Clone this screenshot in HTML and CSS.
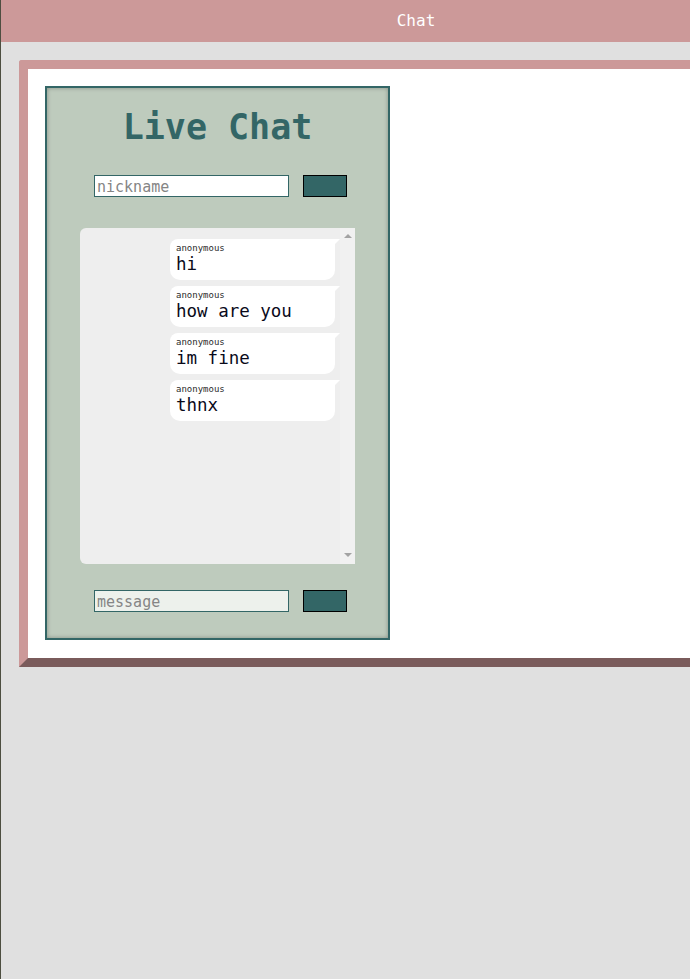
FILE: index.html
```html
<!DOCTYPE html>
<html>
<head>
<meta charset="utf-8">
<title>Chat</title>
<link rel="stylesheet" href="styles.css">
</head>
<body>
<div class="page">
  <header class="topbar">Chat</header>
  <main class="stage">
    <section class="frame">
      <div class="panel">
        <h1 class="title">Live Chat</h1>
        <div class="row row-nick">
          <input class="field" type="text" placeholder="nickname">
          <button class="btn" type="button"></button>
        </div>
        <div class="messages">
          <div class="list">
            <div class="bubble">
              <div class="name">anonymous</div>
              <div class="text">hi</div>
            </div>
            <div class="bubble">
              <div class="name">anonymous</div>
              <div class="text">how are you</div>
            </div>
            <div class="bubble">
              <div class="name">anonymous</div>
              <div class="text">im fine</div>
            </div>
            <div class="bubble">
              <div class="name">anonymous</div>
              <div class="text">thnx</div>
            </div>
          </div>
          <div class="scrollbar">
            <span class="arrow arrow-up"></span>
            <span class="arrow arrow-down"></span>
          </div>
        </div>
        <div class="row row-msg">
          <input class="field field-msg" type="text" placeholder="message">
          <button class="btn" type="button"></button>
        </div>
      </div>
    </section>
  </main>
</div>
</body>
</html>
```

FILE: styles.css
```css
html {
  overflow: hidden;
}
body {
  margin: 0;
  min-height: 100vh;
  background: #e0e0e0;
  border-left: 1px solid #4d4e40;
  font-family: "DejaVu Sans Mono", monospace;
}
.page {
  width: 830px;
}
.topbar {
  height: 42px;
  box-sizing: border-box;
  background: #cc9999;
  color: #ffffff;
  font-size: 16px;
  line-height: 42px;
  text-align: center;
}
.stage {
  padding: 18px 0 0 18px;
}
.frame {
  border: 9px solid;
  border-color: #cc9999 #cc9999 #7a5b5b #cc9999;
  border-top-left-radius: 3px;
  background: #ffffff;
  padding: 17px 17px 18px 17px;
}
.panel {
  width: 345px;
  height: 554px;
  box-sizing: border-box;
  border: 2px solid #336666;
  background: #becbbd;
  box-shadow: inset 0 0 4px rgba(0, 0, 0, 0.3);
  display: flex;
  flex-direction: column;
}
.title {
  margin: 19px 0 0 0;
  font-size: 35px;
  font-weight: bold;
  color: #336666;
  text-align: center;
  line-height: 41px;
}
.row {
  display: flex;
  gap: 14px;
  padding-left: 47px;
}
.row-nick {
  margin-top: 27px;
}
.row-msg {
  margin-top: 26px;
}
.field {
  width: 195px;
  height: 22px;
  box-sizing: border-box;
  margin: 0;
  padding: 1px 2px 0 2px;
  border: 1px solid #336666;
  background: #ffffff;
  font-family: "DejaVu Sans Mono", monospace;
  font-size: 15px;
  outline: none;
}
.field::placeholder {
  color: #858585;
}
.field-msg {
  background: #edf1ec;
}
.btn {
  width: 44px;
  height: 22px;
  margin: 0;
  padding: 0;
  border: 1px solid #000000;
  background: #336666;
}
.messages {
  margin: 31px 0 0 33px;
  width: 275px;
  height: 336px;
  display: flex;
  background: #eeeeee;
  border-radius: 6px 0 0 6px;
  overflow: hidden;
}
.list {
  flex: 1;
  padding: 11px 5px 0 90px;
}
.scrollbar {
  width: 15px;
  background: #f1f1f1;
  display: flex;
  flex-direction: column;
  justify-content: space-between;
  align-items: center;
  padding: 6px 0 7px 0;
  box-sizing: border-box;
}
.arrow {
  width: 0;
  height: 0;
  border-left: 4px solid transparent;
  border-right: 4px solid transparent;
}
.arrow-up {
  border-bottom: 4px solid #a3a3a3;
}
.arrow-down {
  border-top: 4px solid #a3a3a3;
}
.bubble {
  position: relative;
  background: #ffffff;
  border-radius: 8px 0 10px 10px;
  padding: 4px 6px 5px 6px;
  margin-bottom: 6px;
  height: 41px;
  box-sizing: border-box;
}
.bubble::after {
  content: "";
  position: absolute;
  top: 0;
  right: -5px;
  width: 0;
  height: 0;
  border-top: 5px solid #ffffff;
  border-right: 5px solid transparent;
}
.name {
  font-size: 9px;
  line-height: 11px;
  color: #2a2a2a;
}
.text {
  font-size: 17.5px;
  line-height: 21px;
  color: #0a0a1a;
}
```
